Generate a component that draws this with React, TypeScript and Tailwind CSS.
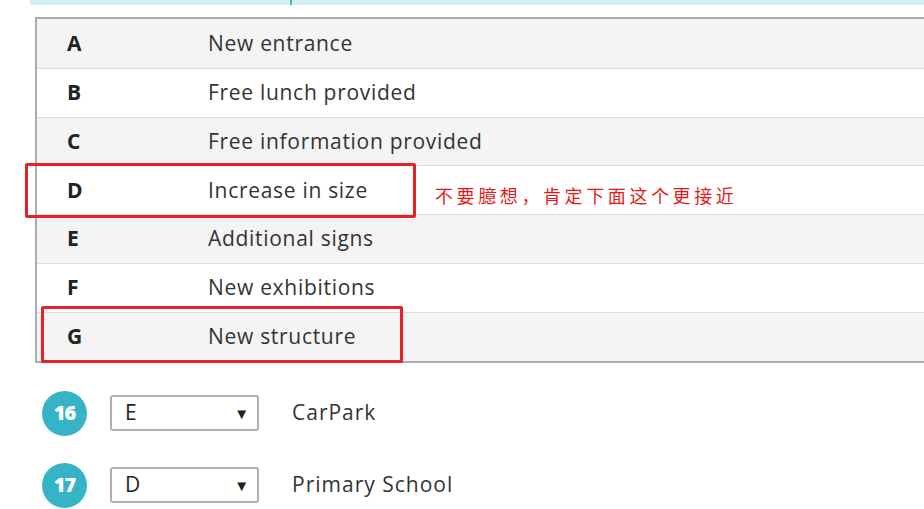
import React from "react";

const rows = [
  ["A", "New entrance"],
  ["B", "Free lunch provided"],
  ["C", "Free information provided"],
  ["D", "Increase in size"],
  ["E", "Additional signs"],
  ["F", "New exhibitions"],
  ["G", "New structure"],
];

function Q({ n, v, label, mt }: { n: number; v: string; label: string; mt: string }) {
  return (
    <div className={`flex items-center ${mt}`}>
      <div className="ml-[42px] flex h-[45px] w-[45px] items-center justify-center rounded-full bg-[#36b4c7] text-[20px] font-extrabold tracking-[-1px] text-white">
        {n}
      </div>
      <div className="ml-[23px] flex h-[36px] w-[149px] items-center justify-between rounded-[3px] border-2 border-[#b0b0b0] bg-white pl-[13px] pr-[8px] text-[21px] text-[#222]">
        <span>{v}</span>
        <span className="text-[15px] text-[#222]">▼</span>
      </div>
      <div className="ml-[33px] text-[21px] tracking-[1px] text-[#333]">{label}</div>
    </div>
  );
}

export default function App() {
  return (
    <div
      className="relative h-[509px] w-[924px] overflow-hidden bg-white"
      style={{ fontFamily: "'Open Sans', Lato, sans-serif" }}
    >
      <div className="ml-[30px] flex h-[5px] bg-[#d5eef2]">
        <div className="ml-[260px] h-full w-[2px] bg-[#3bb5c7]" />
      </div>
      <div className="ml-[35px] mt-[12px] w-[1000px] border-l-2 border-t-2 border-b-2 border-[#ababab]">
        {rows.map(([l, t], i) => (
          <div
            key={l}
            className={`flex h-[48.8px] items-center ${i > 0 ? "border-t border-[#dcdcdc]" : ""} ${
              i % 2 === 0 ? "bg-[#f4f4f4]" : "bg-white"
            }`}
          >
            <div className="w-[171px] pl-[30px] text-[21px] font-bold text-[#222]">{l}</div>
            <div className="text-[21px] tracking-[0.7px] text-[#333]">{t}</div>
          </div>
        ))}
      </div>
      <div className="pointer-events-none absolute left-[25px] top-[163px] h-[55px] w-[391px] rounded-[2px] border-[3px] border-[#e8202a]" />
      <div className="pointer-events-none absolute left-[41px] top-[306px] h-[57px] w-[362px] rounded-[2px] border-[3px] border-[#e8202a]" />
      <div
        className="absolute left-[435px] top-[183px] text-[18px] leading-[24px] tracking-[3.6px] text-[#e81818]"
        style={{ fontFamily: "'Noto Sans CJK SC', sans-serif" }}
      >
        不要臆想，肯定下面这个更接近
      </div>
      <Q n={16} v="E" label="CarPark" mt="mt-[28px]" />
      <Q n={17} v="D" label="Primary School" mt="mt-[27px]" />
    </div>
  );
}
